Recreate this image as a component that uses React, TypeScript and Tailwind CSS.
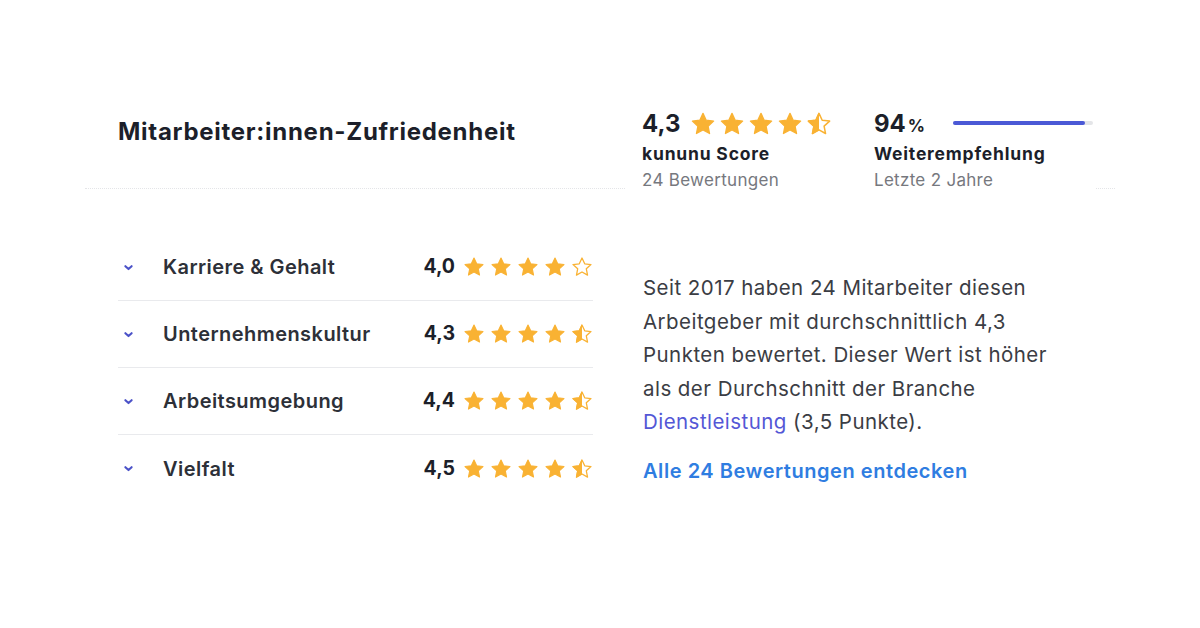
import React from 'react';

// ── STAR ──
const STAR_PATH = 'M12 2.2l2.95 6.3 6.85.8-5.1 4.7 1.35 6.8L12 17.4l-6.05 3.4 1.35-6.8-5.1-4.7 6.85-.8z';

function Star({ fill, size, id }: { fill: 'full' | 'half' | 'empty'; size: number; id: string }) {
    return (
        <svg width={size} height={size} viewBox="0 0 24 24" className="shrink-0">
            <defs>
                <clipPath id={id}>
                    <rect x="0" y="0" width="12" height="24" />
                </clipPath>
            </defs>
            {fill === 'full' ? (
                <path d={STAR_PATH} fill="#f9b233" stroke="#f9b233" strokeWidth="1.2" strokeLinejoin="round" />
            ) : (
                <>
                    <path d={STAR_PATH} fill="none" stroke="#f9b233" strokeWidth="1.4" strokeLinejoin="round" />
                    {fill === 'half' && (
                        <path d={STAR_PATH} fill="#f9b233" stroke="#f9b233" strokeWidth="1.2" strokeLinejoin="round" clipPath={`url(#${id})`} />
                    )}
                </>
            )}
        </svg>
    );
}

function Stars({ value, size, gap, prefix }: { value: number; size: number; gap: string; prefix: string }) {
    const full = Math.floor(value);
    const half = value - full >= 0.25;
    return (
        <div className={`flex items-center ${gap}`}>
            {[0, 1, 2, 3, 4].map((i) => (
                <Star
                    key={i}
                    id={`${prefix}-${i}`}
                    size={size}
                    fill={i < full ? 'full' : i === full && half ? 'half' : 'empty'}
                />
            ))}
        </div>
    );
}

const ChevronDown = () => (
    <svg width="15" height="15" viewBox="0 0 24 24" fill="none" stroke="#4b52c8" strokeWidth="3.4" strokeLinecap="round" strokeLinejoin="round">
        <polyline points="7 10 12 14.5 17 10" />
    </svg>
);

const categories = [
    { label: 'Karriere & Gehalt', score: '4,0', value: 4.0 },
    { label: 'Unternehmenskultur', score: '4,3', value: 4.3 },
    { label: 'Arbeitsumgebung', score: '4,4', value: 4.4 },
    { label: 'Vielfalt', score: '4,5', value: 4.5 },
];

export default function App() {
    return (
        <div className="w-[1200px] h-[628px] bg-white overflow-hidden" style={{ fontFamily: 'Inter, "Noto Sans", sans-serif' }}>
            <div className="pt-[108px] px-[85px]">
                {/* Header */}
                <div className="flex items-start border-b border-dotted border-[#e4e5e8] h-[81px]">
                    <h2 className="shrink-0 pl-[33px] pt-[9px] text-[24px] font-bold tracking-[0.72px] text-[#1c1f2a] leading-[30px] w-[540px]">
                        Mitarbeiter:innen-Zufriedenheit
                    </h2>
                    <div className="shrink-0 flex bg-white h-[84px] pl-[17px]">
                        <div className="w-[232px]">
                            <div className="flex items-center gap-[10px] h-[32px]">
                                <span className="text-[24px] font-bold text-[#1c1f2a] leading-none">4,3</span>
                                <Stars value={4.5} size={26} gap="gap-[3px]" prefix="head" />
                            </div>
                            <div className="text-[17.5px] font-bold tracking-[0.8px] text-[#1c1f2a] leading-[26px] mt-[1px]">kununu Score</div>
                            <div className="text-[17px] tracking-[0.3px] text-[#76787e] leading-[26px]">24 Bewertungen</div>
                        </div>
                        <div className="w-[222px]">
                            <div className="flex items-center h-[32px]">
                                <span className="text-[24px] font-bold text-[#1c1f2a] leading-none w-[79px]">
                                    94<span className="text-[17px] ml-[2px]">%</span>
                                </span>
                                <div className="w-[140px] h-[4px] rounded-full bg-[#e4e5e8] mb-[3px]">
                                    <div className="h-full rounded-full bg-[#4b59d6]" style={{ width: '94%' }} />
                                </div>
                            </div>
                            <div className="text-[17.5px] font-bold tracking-[0.8px] text-[#1c1f2a] leading-[26px] mt-[1px]">Weiterempfehlung</div>
                            <div className="text-[17px] tracking-[0.3px] text-[#76787e] leading-[26px]">Letzte 2 Jahre</div>
                        </div>
                    </div>
                </div>

                {/* Body */}
                <div className="flex pt-[45px]">
                    <div className="shrink-0 ml-[33px] w-[475px]">
                        {categories.map((c, i) => (
                            <div
                                key={c.label}
                                className={`flex items-center h-[67px] ${i < categories.length - 1 ? 'border-b border-[#e9eaed]' : ''}`}
                            >
                                <div className="w-[45px] pl-[3px] flex items-center">
                                    <ChevronDown />
                                </div>
                                <span className="flex-1 text-[20px] font-semibold tracking-[0.45px] text-[#2d3038]">{c.label}</span>
                                <span className="text-[19.5px] font-bold text-[#1c1f2a] mr-[8px]">{c.score}</span>
                                <Stars value={c.value} size={22} gap="gap-[5px]" prefix={`row${i}`} />
                            </div>
                        ))}
                    </div>
                    <div className="ml-[50px] w-[420px] pt-[37px]">
                        <p className="text-[20.5px] leading-[33.5px] tracking-[0.45px] text-[#3b3d44]">
                            Seit 2017 haben 24 Mitarbeiter diesen Arbeitgeber mit durchschnittlich 4,3 Punkten bewertet. Dieser Wert ist höher als der Durchschnitt der Branche{' '}
                            <a className="text-[#5457d6]">Dienstleistung</a> (3,5 Punkte).
                        </p>
                        <a className="block mt-[17px] text-[20px] font-semibold tracking-[0.55px] text-[#2f7de1]">Alle 24 Bewertungen entdecken</a>
                    </div>
                </div>
            </div>
        </div>
    );
}
